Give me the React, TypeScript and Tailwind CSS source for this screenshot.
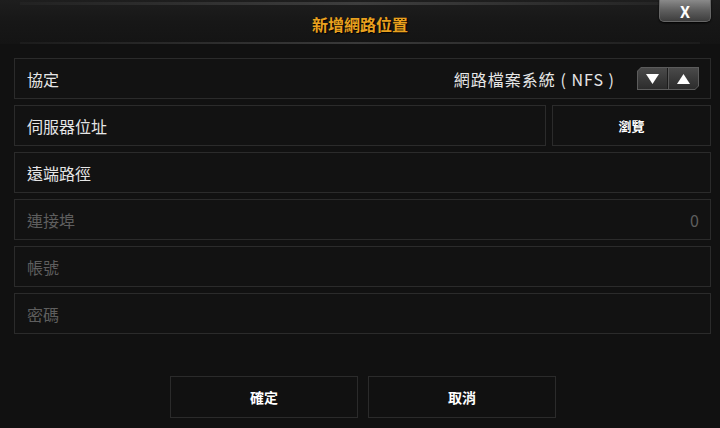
const font = "font-['Noto_Sans_CJK_TC','Noto_Sans',sans-serif]";

function Row({
  label,
  dim,
  right,
}: {
  label: string;
  dim?: boolean;
  right?: React.ReactNode;
}) {
  return (
    <div className="flex h-[41px] items-center justify-between border border-[#2b2b2b] bg-[#121212] pl-[12px] pr-[11px]">
      <span className={`text-[16px] ${dim ? "text-[#5e5e5e]" : "text-[#e6e6e6]"}`}>{label}</span>
      {right}
    </div>
  );
}

function Spinner() {
  return (
    <div className="flex h-[23px] w-[62px] [clip-path:polygon(4px_0,100%_0,100%_calc(100%-4px),calc(100%-4px)_100%,0_100%,0_4px)] bg-[#5c5c5c] p-px">
      <div className="flex flex-1 [clip-path:polygon(3px_0,100%_0,100%_calc(100%-3px),calc(100%-3px)_100%,0_100%,0_3px)] bg-gradient-to-b from-[#4a4a4a] to-[#2c2c2c]">
        <div className="flex flex-1 items-center justify-center border-r border-[#1c1c1c]">
          <svg width="13" height="10" viewBox="0 0 13 10">
            <path d="M0 0 H13 L6.5 10 Z" fill="#fff" />
          </svg>
        </div>
        <div className="flex flex-1 items-center justify-center border-l border-[#5a5a5a]">
          <svg width="13" height="10" viewBox="0 0 13 10">
            <path d="M0 10 H13 L6.5 0 Z" fill="#fff" />
          </svg>
        </div>
      </div>
    </div>
  );
}

export default function App() {
  return (
    <div className={`relative h-[428px] w-[720px] overflow-hidden bg-[#111111] ${font}`}>
      {/* title bar */}
      <div className="flex h-[44px] flex-col bg-gradient-to-b from-[#1e1e1e] via-[#171717] to-[#141414]">
        <div className="mx-[20px] mt-[2px] h-[3px] bg-gradient-to-r from-[#222] via-[#3e3e3e] to-[#222]" />
        <div className="flex flex-1 items-center justify-center">
          <span className="text-[16px] font-bold text-[#e9a11e] [text-shadow:1px_1px_1px_#000]">新增網路位置</span>
        </div>
        <div className="mx-[20px] h-[2px] bg-gradient-to-r from-[#1c1c1c] via-[#3a3a3a] to-[#1c1c1c]" />
      </div>

      <button className="absolute right-[9px] top-0 flex h-[22px] w-[52px] items-center justify-center rounded-b-[5px] border border-t-0 border-[#666] bg-gradient-to-b from-[#8a8a8a] via-[#5e5e5e] to-[#3e3e3e] text-[16px] font-bold text-white shadow-[0_1px_2px_#000]">
        X
      </button>

      <div className="mt-[14px] flex flex-col gap-[6px] px-[14px] pr-[9px]">
        <Row
          label="協定"
          right={
            <div className="flex items-center gap-[22px]">
              <span className="text-[16px] tracking-[1px] text-[#e6e6e6]">網路檔案系統 ( NFS )</span>
              <Spinner />
            </div>
          }
        />
        <div className="flex gap-[6px]">
          <div className="flex-1">
            <Row label="伺服器位址" />
          </div>
          <div className="flex h-[41px] w-[159px] items-center justify-center border border-[#2b2b2b] bg-[#121212] text-[13px] font-bold text-white">
            瀏覽
          </div>
        </div>
        <Row label="遠端路徑" />
        <Row label="連接埠" dim right={<span className="text-[16px] text-[#5e5e5e]">0</span>} />
        <Row label="帳號" dim />
        <Row label="密碼" dim />
      </div>

      <div className="mt-[42px] flex justify-center gap-[10px] pl-[6px]">
        <button className="flex h-[42px] w-[188px] items-center justify-center border border-[#2b2b2b] bg-[#111] text-[14px] font-bold text-white">
          確定
        </button>
        <button className="flex h-[42px] w-[188px] items-center justify-center border border-[#2b2b2b] bg-[#111] text-[14px] font-bold text-white">
          取消
        </button>
      </div>
    </div>
  );
}
